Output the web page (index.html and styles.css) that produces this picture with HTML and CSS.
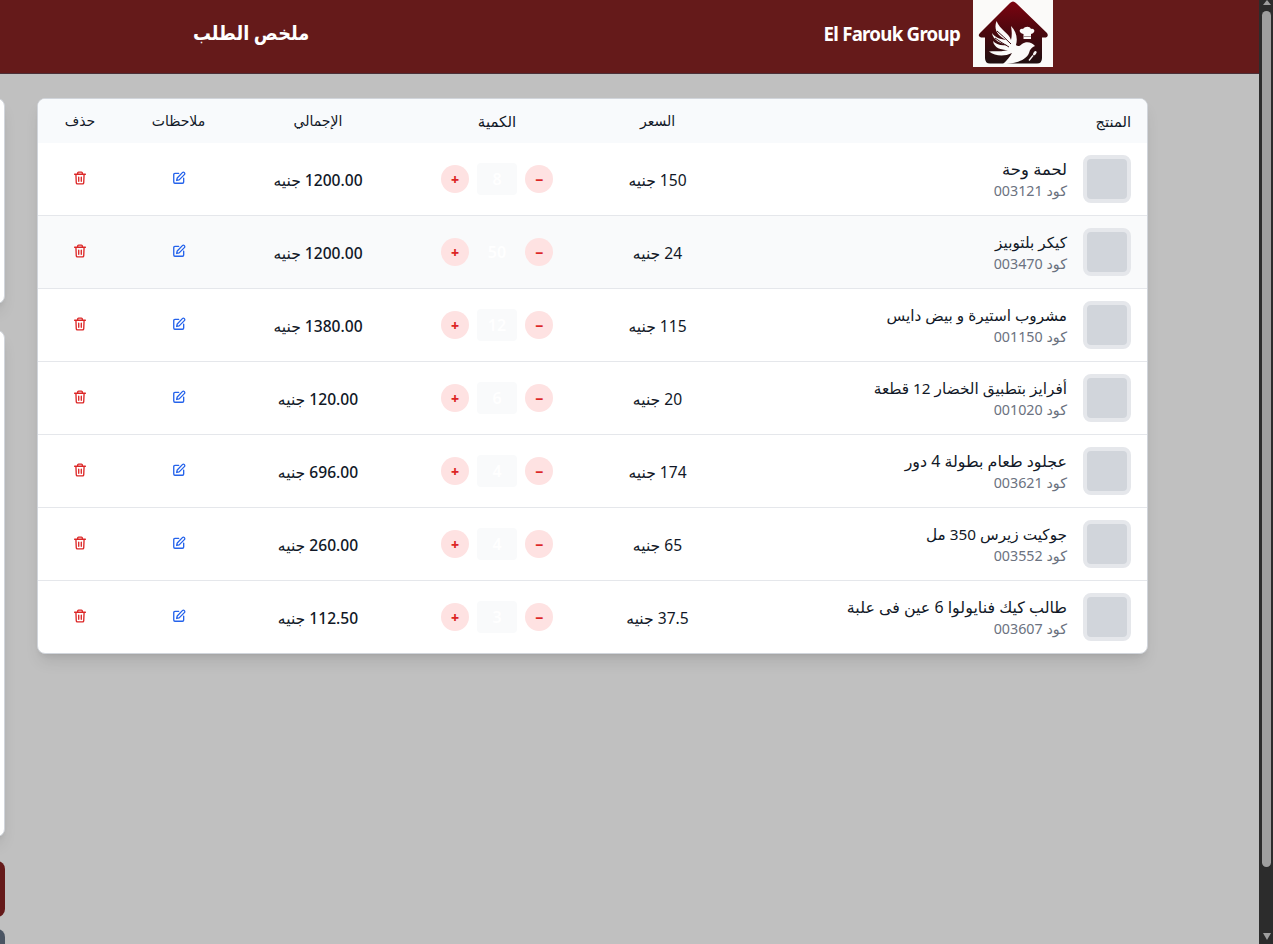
FILE: index.html
```html
<!DOCTYPE html>
<html lang="ar" dir="rtl">
<head>
<meta charset="utf-8">
<title>ملخص الطلب</title>
<link rel="stylesheet" href="styles.css">
</head>
<body>
<svg class="sprite" aria-hidden="true">
  <symbol id="edit" viewBox="0 0 24 24"><path d="M11.500 4H5a2 2 0 0 0-2 2v13a2 2 0 0 0 2 2h13a2 2 0 0 0 2-2v-6.500"/><path d="M17.800 2.800a2.300 2.300 0 0 1 3.400 3.400L12.300 15.200l-4.300 1 1-4.300z"/></symbol>
  <symbol id="trash" viewBox="0 0 24 24"><path d="M2.800 5.500h18.400M19 5.500l-.6 14.500a2 2 0 0 1-2 2H7.600a2 2 0 0 1-2-2L5 5.500M8 5.500V3.500a1.500 1.500 0 0 1 1.500-1.500h5a1.500 1.500 0 0 1 1.500 1.500v2M9.800 10.500v7M14.200 10.500v7"/></symbol>
</svg>
<div class="window">
  <div class="page">
    <header class="topbar">
      <div class="brand">
        <svg class="logo" viewBox="0 0 80 67">
          <defs><linearGradient id="roof" x1="0" y1="0" x2="0" y2="1"><stop offset="0" stop-color="#7c0410"/><stop offset=".5" stop-color="#4a080e"/><stop offset="1" stop-color="#1f1011"/></linearGradient></defs>
          <rect width="80" height="67" fill="#fbfaf9"/>
          <path fill="url(#roof)" d="M37 3Q40 0 43 3L74 33Q76 36 73 37.500L69 37.500V58Q69 63.500 64 63.500H17Q12 63.500 12 58V37.500H8Q4 36 7 33Z"/>
          <path fill="#fbfaf9" d="M23.500 21C20 31 26 36 33 40C26 39 22 37 19 33C20 40 27 43 34 45C27 46 23 44 20 41C21 48 28 50 35 50C28 52 22 51 16 51.500C22 56 31 57 39 53C37 57 34 60 30 64C40 64 53 61 56 53C57 49 59 47 62 46C59 42 53 41 49 44C47 46 45 47 43 45C45 38 43 31 38 26C39 32 39 36 38 40C36 33 27 30 23.500 21Z"/>
          <path stroke="#3d0d12" stroke-width="1" fill="none" d="M24 31Q30 36 38 44M22 38Q29 43 36 47"/>
          <path fill="#fbfaf9" d="M50.500 39V34C45 33 46 28 50 29C52 26 57 26 58 29C62 28 63 33 58 34V39Z"/>
          <path stroke="#8b7374" stroke-width=".8" d="M50.500 36.500H58"/>
          <path d="M56 60.500L60 55.500" stroke="#fbfaf9" stroke-width="1.300"/><ellipse cx="61.800" cy="53.300" rx="1.400" ry="2.500" transform="rotate(35 61.800 53.300)" fill="#fbfaf9"/>
        </svg>
        <span class="name" dir="ltr">El Farouk Group</span>
      </div>
      <h1 class="title">ملخص الطلب</h1>
    </header>
    <main class="content">
      <section class="card">
        <table class="items">
          <colgroup><col class="c-product"><col class="c-price"><col class="c-qty"><col class="c-total"><col class="c-notes"><col class="c-delete"></colgroup>
          <thead><tr><th class="first"><span>المنتج</span></th><th><span>السعر</span></th><th><span>الكمية</span></th><th><span>الإجمالي</span></th><th><span>ملاحظات</span></th><th><span>حذف</span></th></tr></thead>
          <tbody>
            <tr><td><div class="product"><i class="thumb"></i><div class="info"><b class="roomy">لحمة وحة</b><small>كود 003121</small></div></div></td><td class="price"><span>150 جنيه</span></td><td><div class="qty"><button>−</button><output>8</output><button>+</button></div></td><td class="total"><span>1200.00 جنيه</span></td><td><svg class="icon edit"><use href="#edit"/></svg></td><td><svg class="icon trash"><use href="#trash"/></svg></td></tr>
            <tr class="active"><td><div class="product"><i class="thumb"></i><div class="info"><b class="snug">كيكر بلتوبيز</b><small>كود 003470</small></div></div></td><td class="price"><span>24 جنيه</span></td><td><div class="qty"><button>−</button><output>50</output><button>+</button></div></td><td class="total"><span>1200.00 جنيه</span></td><td><svg class="icon edit"><use href="#edit"/></svg></td><td><svg class="icon trash"><use href="#trash"/></svg></td></tr>
            <tr><td><div class="product"><i class="thumb"></i><div class="info"><b class="snug">مشروب استيرة و بيض دايس</b><small>كود 001150</small></div></div></td><td class="price"><span>115 جنيه</span></td><td><div class="qty"><button>−</button><output>12</output><button>+</button></div></td><td class="total"><span>1380.00 جنيه</span></td><td><svg class="icon edit"><use href="#edit"/></svg></td><td><svg class="icon trash"><use href="#trash"/></svg></td></tr>
            <tr><td><div class="product"><i class="thumb"></i><div class="info"><b class="snug">أفرايز بتطبيق الخضار 12 قطعة</b><small>كود 001020</small></div></div></td><td class="price"><span>20 جنيه</span></td><td><div class="qty"><button>−</button><output>6</output><button>+</button></div></td><td class="total"><span>120.00 جنيه</span></td><td><svg class="icon edit"><use href="#edit"/></svg></td><td><svg class="icon trash"><use href="#trash"/></svg></td></tr>
            <tr><td><div class="product"><i class="thumb"></i><div class="info"><b class="even">عجلود طعام بطولة 4 دور</b><small>كود 003621</small></div></div></td><td class="price"><span>174 جنيه</span></td><td><div class="qty"><button>−</button><output>4</output><button>+</button></div></td><td class="total"><span>696.00 جنيه</span></td><td><svg class="icon edit"><use href="#edit"/></svg></td><td><svg class="icon trash"><use href="#trash"/></svg></td></tr>
            <tr><td><div class="product"><i class="thumb"></i><div class="info"><b class="snug">جوكيت زيرس 350 مل</b><small>كود 003552</small></div></div></td><td class="price"><span>65 جنيه</span></td><td><div class="qty"><button>−</button><output>4</output><button>+</button></div></td><td class="total"><span>260.00 جنيه</span></td><td><svg class="icon edit"><use href="#edit"/></svg></td><td><svg class="icon trash"><use href="#trash"/></svg></td></tr>
            <tr><td><div class="product"><i class="thumb"></i><div class="info"><b class="even">طالب كيك فنايولوا 6 عين فى علبة</b><small>كود 003607</small></div></div></td><td class="price"><span>37.5 جنيه</span></td><td><div class="qty"><button>−</button><output>3</output><button>+</button></div></td><td class="total"><span>112.50 جنيه</span></td><td><svg class="icon edit"><use href="#edit"/></svg></td><td><svg class="icon trash"><use href="#trash"/></svg></td></tr>
          </tbody>
        </table>
      </section>
      <aside class="side">
        <div class="panel customer"></div>
        <div class="panel summary"></div>
        <div class="action confirm"></div>
        <div class="action back"></div>
      </aside>
    </main>
  </div>
  <div class="scrollbar"><i class="arrow up"></i><i class="thumb-bar"></i><i class="arrow down"></i></div>
</div>
</body>
</html>
```
FILE: styles.css
```css
* { box-sizing: border-box; }
body { margin: 0; height: 944px; overflow: hidden; background: #c0c0c0; color: #111827; font: 16px/24px "Noto Sans", "DejaVu Sans", sans-serif; }
.sprite { display: none; }
.window { display: flex; direction: ltr; height: 944px; }
.page { direction: rtl; width: 1259px; overflow: hidden; }
.topbar { height: 74px; padding: 0 206px 0 193px; background: #651a1a; border-bottom: 1px solid #4b3038; color: #fff; display: flex; justify-content: space-between; align-items: flex-start; }
.brand { display: flex; gap: 13px; align-items: center; }
.logo { width: 80px; height: 67px; display: block; }
.name { font-size: 18.700px; font-weight: 700; letter-spacing: -.75px; white-space: nowrap; }
.title { margin: 0; font-size: 20px; line-height: 65px; font-weight: 700; transform: scaleX(.89); transform-origin: left center; }
.content { display: flex; gap: 32px; padding: 24px 111px 0 0; align-items: flex-start; }
.card { flex: none; width: 1111px; background: #fff; border: 1px solid #d1d5db; border-radius: 8px; overflow: hidden; box-shadow: 0 10px 15px -3px rgba(0,0,0,.1), 0 4px 6px -4px rgba(0,0,0,.1); }
.items { width: 100%; table-layout: fixed; border-collapse: separate; border-spacing: 0; }
.c-product { width: 425px; }
.c-price { width: 129px; }
.c-qty { width: 192px; }
.c-total { width: 166px; }
.c-notes { width: 113px; }
.c-delete { width: 84px; }
th { height: 44px; padding: 0; background: #f8fafc; font-size: 14px; font-weight: 400; text-align: center; }
th.first { padding-right: 16px; text-align: right; font-size: 14.700px; }
th:nth-child(3) { font-size: 15px; }
td { height: 73px; padding: 0; border-bottom: 1px solid #e5e7eb; text-align: center; white-space: nowrap; }
tr:last-child td { border-bottom: 0; height: 72px; }
.active td { background: #f9fafb; }
.price, .total { padding-top: 1px; font-size: 15.600px; }
.total { font-weight: 500; }
.product { display: flex; align-items: center; gap: 16px; padding-right: 16px; text-align: right; }
.thumb { width: 48px; height: 48px; border: 4px solid #e5e7eb; border-radius: 8px; background: #d1d5db; }
.info b, .info small { display: block; font-weight: 400; }
.info b { line-height: 24px; }
.info .snug { font-size: 15.300px; }
.info .even { font-size: 15.900px; }
.info .roomy { font-size: 16.400px; }
.info small { font-size: 14.300px; line-height: 20px; color: #6b7280; }
.qty { display: flex; justify-content: center; align-items: center; gap: 8px; }
.qty button { width: 28px; height: 28px; padding: 1px 0 0; border: 0; border-radius: 50%; background: #fee2e2; color: #dc2626; font: 800 14px/28px "Noto Sans", sans-serif; }
.qty output { width: 40px; height: 32px; border-radius: 4px; background: #f9fafb; color: #fff; font-weight: 600; line-height: 33px; }
.icon { display: inline-block; width: 14px; height: 14px; fill: none; stroke: currentColor; stroke-width: 2.300; stroke-linecap: round; stroke-linejoin: round; }
.edit { color: #2563eb; }
.trash { color: #dc2626; }
.side { flex: none; width: 360px; }
.panel { background: #fff; border: 1px solid #d1d5db; border-radius: 8px; box-shadow: 0 10px 15px -3px rgba(0,0,0,.1), 0 4px 6px -4px rgba(0,0,0,.1); }
.customer { height: 206px; }
.summary { height: 507px; margin-top: 26px; }
.action { border-radius: 8px; background: #651a1a; }
.confirm { height: 56px; margin-top: 24px; }
.back { height: 56px; margin-top: 12px; background: #4b5563; }
.scrollbar { width: 14px; background: #2c2c2c; display: flex; flex-direction: column; align-items: center; padding: 0 0 4px 1px; }
.arrow { border: 4.500px solid transparent; }
.up { height: 5px; border-top: 0; border-bottom: 5px solid #9f9f9f; }
.thumb-bar { width: 9px; height: 856px; margin-top: 6px; border-radius: 5px; background: #9f9f9f; }
.down { margin-top: auto; border-bottom: 0; border-top: 7px solid #9f9f9f; }
```
